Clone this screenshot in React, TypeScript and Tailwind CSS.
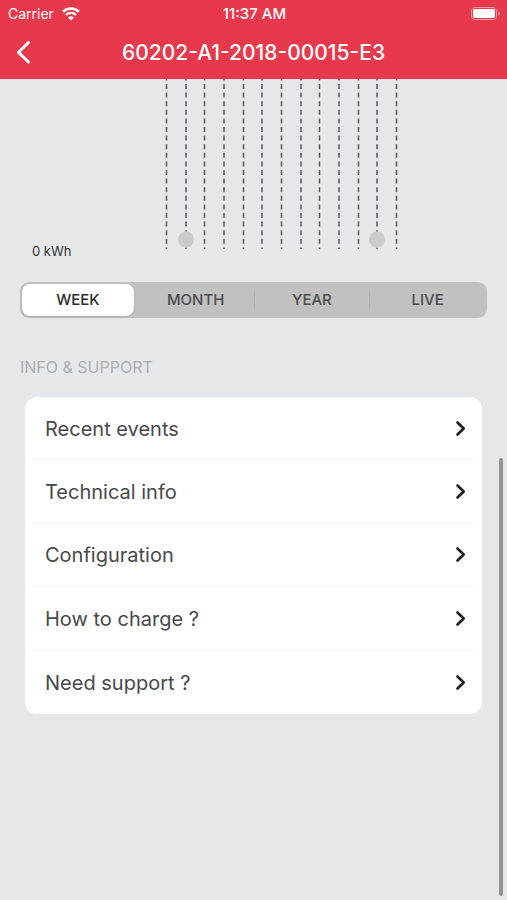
// App.tsx

import type React from 'react';
import { useState } from 'react';

type Period = 'WEEK' | 'MONTH' | 'YEAR' | 'LIVE';

const PERIODS: Period[] = ['WEEK', 'MONTH', 'YEAR', 'LIVE'];

const SUPPORT_LINKS = [
  { id: 'events', label: 'Recent events' },
  { id: 'technical', label: 'Technical info' },
  { id: 'configuration', label: 'Configuration' },
  { id: 'charge', label: 'How to charge ?' },
  { id: 'support', label: 'Need support ?' },
];

const GRID_LINES = [10, 29.5, 48, 67.5, 87, 105.5, 125, 144.5, 163, 182.5, 202, 220.5, 240];
const POINTS = [29.5, 220.5];

function WifiIcon() {
  return (
    <svg width="18" height="14" viewBox="0 0 18 14" fill="none" aria-hidden="true">
      <path d="M1 4.7a11.6 11.6 0 0 1 16 0" stroke="white" strokeWidth="2.6" />
      <path d="M3.9 8a7.2 7.2 0 0 1 10.2 0" stroke="white" strokeWidth="2.3" />
      <path d="M9 13.5 6 10.6a4.3 4.3 0 0 1 6 0Z" fill="white" />
    </svg>
  );
}

function BatteryIcon() {
  return (
    <svg width="30" height="14" viewBox="0 0 30 14" fill="none" aria-hidden="true">
      <rect x="0.5" y="0.5" width="25" height="12" rx="3.5" stroke="white" strokeOpacity="0.5" />
      <rect x="2" y="2" width="22" height="9" rx="2" fill="white" />
      <path d="M27.5 4.5v4c1-.3 1.6-1.1 1.6-2s-.6-1.7-1.6-2Z" fill="white" fillOpacity="0.5" />
    </svg>
  );
}

function Header({ title }: { title: string }) {
  return (
    <header className="bg-[#e8384c] text-white">
      <div className="grid h-7 grid-cols-3 items-center pr-1.5 pl-2">
        <div className="flex items-center gap-2 text-sm">
          <span>Carrier</span>
          <WifiIcon />
        </div>
        <span className="text-center text-[15px] font-medium">11:37 AM</span>
        <div className="flex justify-end">
          <BatteryIcon />
        </div>
      </div>
      <div className="grid h-[51px] grid-cols-[48px_1fr_48px] items-center pb-0.5">
        <button type="button" aria-label="Back" className="flex h-full items-center pl-4">
          <svg width="16" height="24" viewBox="0 0 16 24" fill="none" aria-hidden="true">
            <path
              d="M12.5 1.5 2.5 11.3l10 9.700"
              stroke="white"
              strokeWidth="3"
              strokeLinecap="round"
              strokeLinejoin="round"
            />
          </svg>
        </button>
        <h1 className="text-center text-[21px] font-medium">{title}</h1>
      </div>
    </header>
  );
}

function EnergyChart() {
  return (
    <div className="flex items-end pl-8">
      <span className="w-[125px] text-[13px] leading-4 text-[#333333]">0 kWh</span>
      <svg
        width="250"
        height="180"
        viewBox="0 0 250 180"
        className="shrink-0"
        role="img"
        aria-label="Energy chart"
      >
        {GRID_LINES.map((x) => (
          <line
            key={x}
            x1={x - 0.5}
            x2={x - 0.5}
            y1="0"
            y2="170"
            stroke="#53585c"
            strokeWidth="1.5"
            strokeDasharray="5 3.6"
            strokeDashoffset="3.6"
          />
        ))}
        {POINTS.map((x) => (
          <circle key={x} cx={x - 0.5} cy="160.5" r="8" fill="#cbcbcb" />
        ))}
      </svg>
    </div>
  );
}

interface PeriodTabsProps {
  selected: Period;
  onSelect: (period: Period) => void;
}

function PeriodTabs({ selected, onSelect }: PeriodTabsProps) {
  const selectedIndex = PERIODS.indexOf(selected);

  return (
    <div className="mx-5 grid h-9 grid-cols-4 rounded-[9px] bg-[#c1c1c2] p-0.5">
      {PERIODS.map((period, index) => {
        const isSelected = index === selectedIndex;
        const hasDivider = index > 0 && !isSelected && index - 1 !== selectedIndex;
        return (
          <button
            key={period}
            type="button"
            aria-pressed={isSelected}
            onClick={() => onSelect(period)}
            className={
              isSelected
                ? 'mr-1 rounded-lg bg-white text-[15px] font-medium text-[#2b2b2b] shadow-sm'
                : 'flex items-center text-[15px] font-medium text-[#4c4c4d]'
            }
          >
            {hasDivider && <span className="h-4 w-px bg-[#b2b2b4]" />}
            <span className={isSelected ? '' : 'flex-1 text-center'}>{period}</span>
          </button>
        );
      })}
    </div>
  );
}

function LinkRow({ label, children }: { label: string; children?: React.ReactNode }) {
  return (
    <li className="mx-1 border-b border-[#f5f5f6] last:border-b-0">
      <button
        type="button"
        className="flex h-full w-full items-center justify-between pt-px pr-[11px] pl-4 text-left text-xl text-[#48484a]"
      >
        <span>{label}</span>
        {children}
      </button>
    </li>
  );
}

export default function App() {
  const [period, setPeriod] = useState<Period>('WEEK');

  return (
    <div className="relative flex min-h-screen flex-col bg-[#e6e7e9] font-['Inter','Liberation_Sans',sans-serif]">
      <Header title="60202-A1-2018-00015-E3" />
      <main>
        <EnergyChart />
        <div className="pt-[23px]">
          <PeriodTabs selected={period} onSelect={setPeriod} />
        </div>
        <section className="pt-[39px]">
          <h2 className="px-5 text-base leading-5 text-[#a9afb3]">INFO &amp; SUPPORT</h2>
          <ul className="mx-[25px] mt-5 grid min-h-[317px] auto-rows-fr rounded-xl bg-white">
            {SUPPORT_LINKS.map((link) => (
              <LinkRow key={link.id} label={link.label}>
                <svg width="12" height="18" viewBox="0 0 12 18" fill="none" aria-hidden="true">
                  <path
                    d="M2.5 2.5 8.7 8.5l-6.2 6"
                    stroke="#1c1c1e"
                    strokeWidth="2.6"
                    strokeLinecap="round"
                    strokeLinejoin="round"
                  />
                </svg>
              </LinkRow>
            ))}
          </ul>
        </section>
      </main>
      {/* scroll indicator */}
      <div className="absolute top-[458px] right-1 bottom-1 w-1 rounded-full bg-[#929395]" />
    </div>
  );
}
